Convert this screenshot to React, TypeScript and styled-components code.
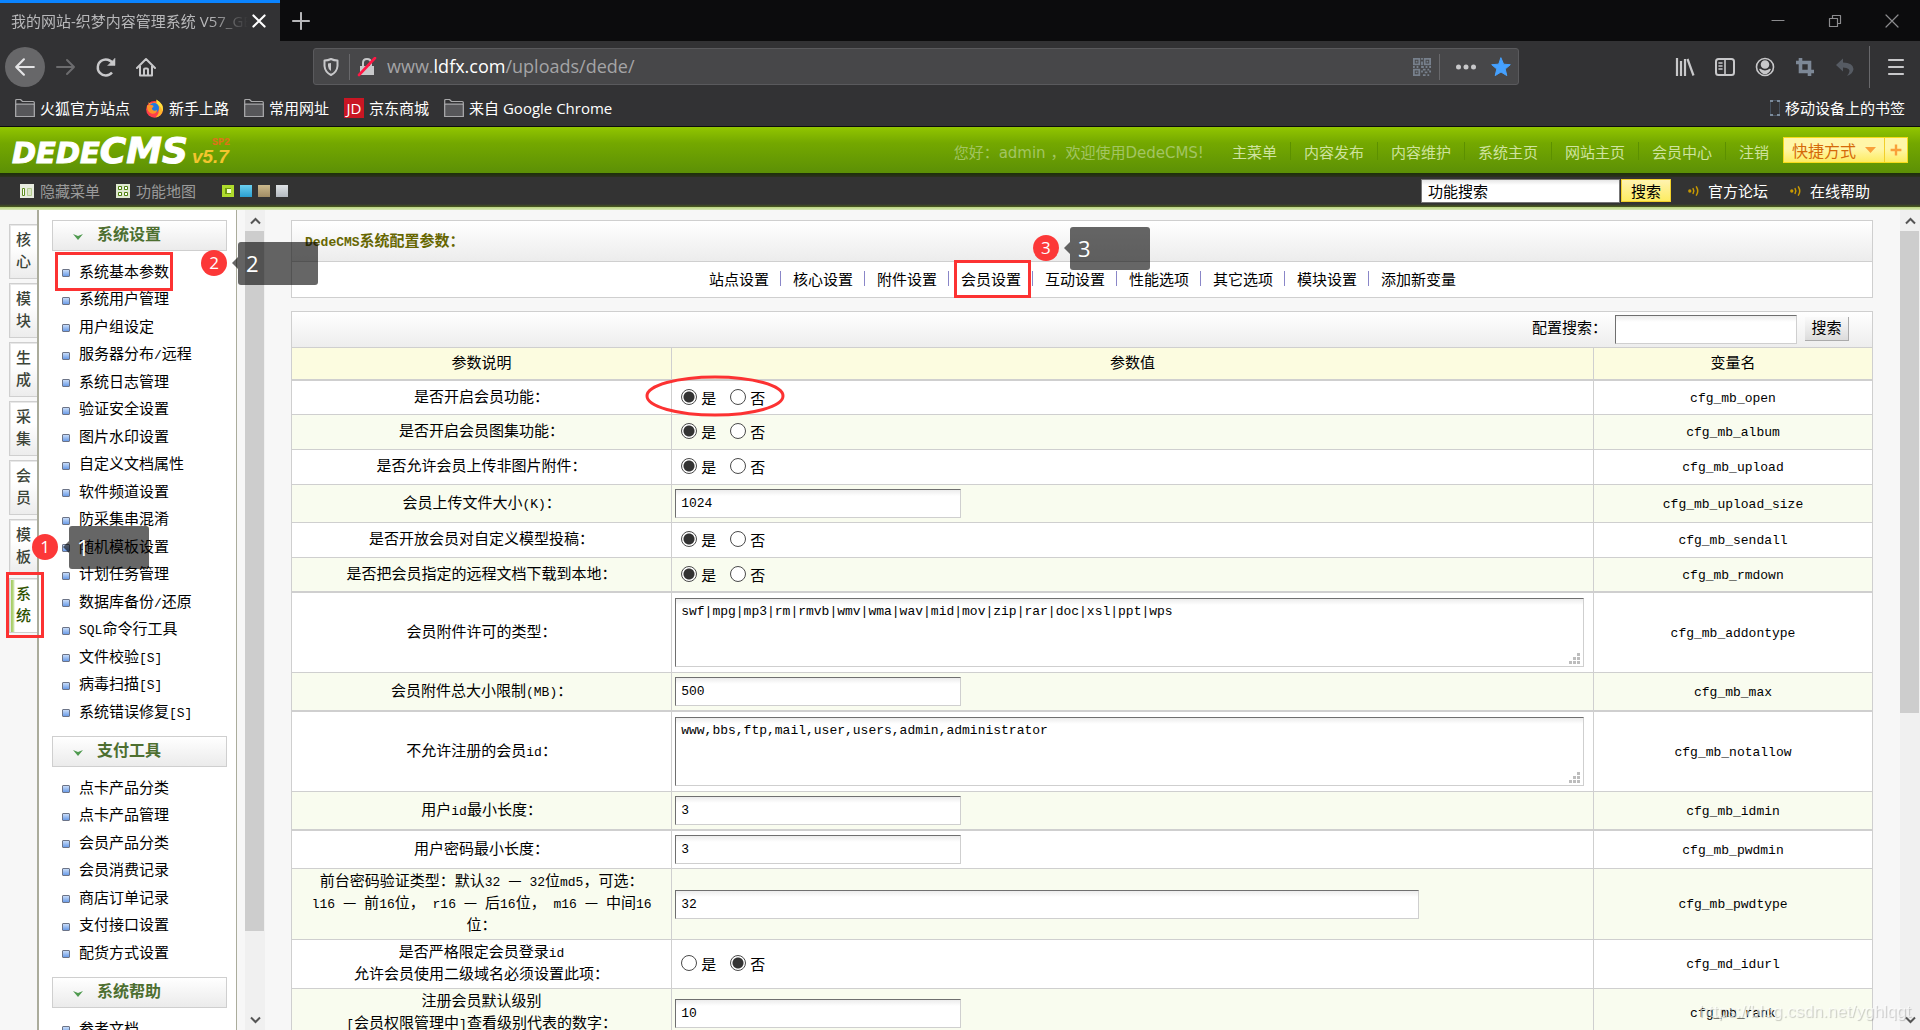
import React from "react";
import styled, { createGlobalStyle, css } from "styled-components";

const CJK = `"Noto Sans CJK SC", sans-serif`;
const UI = `"Open Sans", "Noto Sans CJK SC", sans-serif`;
const MONO = `"Liberation Mono", "Noto Sans CJK SC", monospace`;
const LINE = "#cfcfcf";
const RED = "#fc3838";

const Global = createGlobalStyle`
  * { box-sizing: border-box; }
  html, body { margin: 0; background: #f7f7f7; }
  body { font: 15px/22px ${CJK}; color: #000; overflow: hidden; }
  a { color: inherit; text-decoration: none; white-space: nowrap; }
  button { font: inherit; color: inherit; padding: 0; margin: 0; border: 0; background: none; cursor: pointer; }
  ul { list-style: none; margin: 0; padding: 0; }
  svg { display: block; flex: none; }
`;

const Page = styled.div`
  height: 100vh;
  display: flex;
  flex-direction: column;
  overflow: hidden;
`;

/* ---------- browser chrome ---------- */
const TabStrip = styled.div`
  display: flex;
  align-items: center;
  height: 41px;
  background: #0c0c0d;
  color: #b8b8ba;
  flex: none;
`;
const Tab = styled.div`
  display: flex;
  align-items: center;
  width: 280px;
  height: 41px;
  padding: 0 14px 2px 11px;
  border-top: 3px solid #0a84ff;
  background: #323234;
  margin-right: 12px;
`;
const TabTitle = styled.span`
  flex: 1;
  overflow: hidden;
  white-space: nowrap;
  font: 15px/22px ${UI};
  margin-right: 4px;
  mask-image: linear-gradient(90deg, #000 84%, transparent 100%);
`;
const WindowButtons = styled.div`
  display: flex;
  gap: 37px;
  margin-left: auto;
  padding-right: 18px;
  color: #8c8c8e;
`;
const NavBar = styled.div`
  display: flex;
  align-items: center;
  height: 51px;
  padding: 0 14px 0 5px;
  background: #323234;
  color: #c8c8ca;
  flex: none;
`;
const NavButtons = styled.div`
  display: flex;
  gap: 20px;
  align-items: center;
  width: 308px;
`;
const BackButton = styled.button`
  width: 40px;
  height: 40px;
  border-radius: 50%;
  background: #676769;
  display: grid;
  place-items: center;
  margin-right: -9px;
`;
const UrlBar = styled.div`
  display: flex;
  align-items: center;
  flex: 1;
  height: 37px;
  padding: 0 7px;
  border: 1px solid #5a5a5d;
  border-radius: 3px;
  background: #474749;
`;
const Rule = styled.span<{ $h: number; $m: string }>`
  width: 1px;
  height: ${(p) => p.$h}px;
  margin: ${(p) => p.$m};
  background: #68686b;
`;
const UrlText = styled.span`
  flex: 1;
  padding: 0 0 2px 10px;
  font: 18px/24px ${UI};
  color: #a4a4a6;
  b { font-weight: 400; color: #fff; }
`;
const ToolIcons = styled.div`
  display: flex;
  align-items: center;
  justify-content: flex-end;
  gap: 20px;
  width: 387px;
`;
const Bookmarks = styled.div`
  display: flex;
  align-items: center;
  gap: 15px;
  height: 35px;
  padding: 0 15px 2px;
  background: #323234;
  border-bottom: 1px solid #0c0c0d;
  color: #fff;
  font: 15px/22px ${UI};
  flex: none;
`;
const Bookmark = styled.a<{ $end?: boolean }>`
  display: flex;
  align-items: center;
  gap: 5px;
  margin-left: ${(p) => (p.$end ? "auto" : 0)};
`;
const JdBadge = styled.span`
  width: 20px;
  height: 20px;
  background: #c91623;
  font: 15px/20px ${UI};
  text-align: center;
`;

/* ---------- CMS header ---------- */
const Header = styled.header`
  display: flex;
  align-items: center;
  height: 50px;
  padding: 0 12px 4px;
  background: linear-gradient(#92c600 0, #74a800 16px, #5c9006 46px, #1d3008 46px, #2c3020 50px);
  color: #cfe39f;
  flex: none;
`;
const Logo = styled.a`
  display: flex;
  align-items: baseline;
  padding-top: 8px;
  color: #fff;
  font: italic 900 29px/36px "DejaVu Sans", sans-serif;
  -webkit-text-stroke: 1px #fff;
`;
const LogoBig = styled.span`
  font-size: 36px;
`;
const Version = styled.span`
  position: relative;
  margin-left: 4px;
  color: #f3c52e;
  font: italic 700 19px/36px "Liberation Sans", sans-serif;
  -webkit-text-stroke: 0;
`;
const Patch = styled.sup`
  position: absolute;
  top: -2px;
  right: -1px;
  color: #e0701a;
  font: 700 10px/12px "Liberation Mono", monospace;
`;
const Greeting = styled.span`
  margin-left: auto;
  margin-right: 28px;
  padding-top: 5px;
  color: #a3c562;
  font: 15px/22px "DejaVu Sans", "Noto Sans CJK SC", sans-serif;
`;
const HeaderLink = styled.a`
  display: flex;
  padding-top: 3px;
  &::after {
    content: "";
    width: 1px;
    height: 18px;
    margin: 1px 13px 0;
    background: #5c9000;
  }
  &:last-of-type::after { width: 0; margin-left: 1px; }
`;
const Quick = styled.div`
  display: flex;
  height: 26px;
  border: 1px solid #f7dc1a;
  background: linear-gradient(#fff6a8 0 45%, #fdec62);
  color: #d56a08;
  font-size: 16px;
  line-height: 24px;
`;
const QuickMain = styled.button`
  display: flex;
  align-items: center;
  gap: 9px;
  padding: 0 8px;
  border-right: 1px solid #f1cf2a;
`;
const QuickAdd = styled.button`
  width: 22px;
  display: grid;
  place-items: center;
`;
const SubBar = styled.div`
  display: flex;
  align-items: center;
  height: 33px;
  padding: 0 50px 6px 20px;
  background: linear-gradient(#333 27px, #4a5c1c 30px, #b9d47e 30px, #d8e8b8 33px);
  color: #9a9a9a;
  flex: none;
`;
const SubLink = styled.a<{ $light?: boolean }>`
  display: flex;
  align-items: center;
  gap: 6px;
  margin-right: 16px;
  ${(p) => p.$light && css`color: #fff; margin: 0 0 0 22px; gap: 8px;`}
`;
const Swatch = styled.button<{ $c: string }>`
  width: 12px;
  height: 12px;
  background: ${(p) => p.$c};
  margin-right: 6px;
`;
const Swatches = styled.div`
  display: flex;
  margin-left: 10px;
`;
const TopSearch = styled.form`
  display: flex;
  align-items: center;
  gap: 1px;
  margin-left: auto;
  margin-right: -5px;
`;
const TopInput = styled.input`
  width: 199px;
  height: 24px;
  padding: 0 6px;
  border: 1px solid #777;
  background: linear-gradient(#e6e6e6, #fff 5px);
  font: 15px/20px ${CJK};
  color: #000;
`;
const TopButton = styled.button`
  width: 50px;
  height: 23px;
  border: 1px solid #f1cf2a;
  background: linear-gradient(#fff3b0, #fdec62);
  color: #000;
  line-height: 20px;
`;

/* ---------- frames ---------- */
const Body = styled.div`
  display: flex;
  flex: 1;
  min-height: 0;
  overflow: hidden;
`;
const Rail = styled.nav`
  display: flex;
  flex-direction: column;
  gap: 4px;
  width: 37px;
  padding: 14px 0 0 9px;
  flex: none;
`;
const RailTab = styled.a<{ $active?: boolean }>`
  position: relative;
  height: 55px;
  padding: 3px 5px 0 6px;
  border: 1px solid ${LINE};
  border-right: 0;
  box-shadow: inset 1px 1px 0 #e8e8e8;
  background: linear-gradient(#fff 40%, #ececec);
  color: #3c4438;
  white-space: normal;
  font-weight: 500;
  ${(p) =>
    p.$active &&
    css`
      background: linear-gradient(90deg, #9cc653 0, #b4d67e 3px, #fff 5px);
      color: #2f5200;
    `}
`;
const MenuPane = styled.nav`
  width: 200px;
  padding: 10px 9px 0 13px;
  border: solid #abac9c;
  border-width: 0 1px 0 2px;
  background: #fff;
  margin-right: 8px;
  flex: none;
`;
const MenuHeading = styled.button`
  display: flex;
  align-items: center;
  gap: 14px;
  width: 100%;
  height: 31px;
  padding: 0 20px 6px;
  border: 1px solid ${LINE};
  background: linear-gradient(#fff, #ebebeb);
  color: #4d6f30;
  font-weight: 700;
  font-size: 16px;
  svg { margin-top: 8px; }
`;
const MenuList = styled.ul`
  margin: 7px 0 10px;
`;
const MenuItem = styled.li`
  position: relative;
  display: flex;
  align-items: center;
  gap: 9px;
  height: 27px;
  padding-left: 10px;
  &:nth-child(odd) { height: 28px; }
  a { padding-bottom: 3px; }
`;
const Bullet = styled.i`
  width: 8px;
  height: 8px;
  margin-top: 2px;
  border: 1px solid #6c7488;
  border-radius: 1px;
  background: linear-gradient(#c8dcf8, #6b9ce8);
  flex: none;
`;
const Track = styled.div`
  display: flex;
  flex-direction: column;
  width: 20px;
  height: 100%;
  background: #f0f0f0;
  flex: none;
`;
const TrackEnd = styled.div`
  height: 21px;
  display: grid;
  place-items: center;
  flex: none;
`;
const TrackRun = styled.div`
  flex: 1;
`;
const Thumb = styled.div<{ $share: number }>`
  height: ${(p) => p.$share}%;
  margin-right: 1px;
  background: #cdcdcd;
`;
const Main = styled.main`
  flex: 1;
  min-width: 0;
  padding: 10px 27px 0 26px;
`;
const Panel = styled.section`
  border: 1px solid ${LINE};
  background: #fff;
  margin-bottom: 13px;
`;
const PanelTitle = styled.h1`
  margin: 0;
  padding: 0 13px;
  height: 41px;
  border-bottom: 1px solid ${LINE};
  background: linear-gradient(#fff, #ececec);
  color: #666600;
  font-size: 15px;
  line-height: 38px;
`;
const Sections = styled.nav`
  display: flex;
  justify-content: center;
  height: 35px;
  padding: 0 0 2px 1px;
  align-items: center;
`;
const SectionCell = styled.span`
  position: relative;
  display: flex;
  align-items: center;
  & + &::before {
    content: "";
    width: 1px;
    height: 15px;
    margin: 0 12px 0 11px;
    background: #8a86c8;
  }
`;
const Anchor = styled.span`
  position: relative;
`;
const Filter = styled.form`
  display: flex;
  justify-content: flex-end;
  align-items: center;
  gap: 8px;
  height: 36px;
  padding-right: 23px;
  border-bottom: 1px solid ${LINE};
  background: linear-gradient(#fff, #ededed);
  label { padding-bottom: 5px; }
`;
const field = css`
  border: 1px solid;
  border-color: #6f6f6f ${LINE} ${LINE} #6f6f6f;
  background: linear-gradient(#ececec, #fff 6px);
  font: 13px/18px ${MONO};
  color: #000;
  border-radius: 0;
  display: block;
`;
const TextField = styled.input<{ $w: string }>`
  ${field}
  width: ${(p) => p.$w};
  height: 29px;
  padding: 0 5px;
`;
const FilterButton = styled.button`
  width: 44px;
  height: 24px;
  padding-bottom: 2px;
  margin-bottom: 2px;
  border: solid #ababab;
  border-width: 0 1px 1px 0;
  background: linear-gradient(#fafafa, #dcdcdc);
  line-height: 20px;
`;
const AreaWrap = styled.div`
  position: relative;
  width: calc(100% - 6px);
  svg { position: absolute; right: 4px; bottom: 3px; }
`;
const Area = styled.textarea`
  ${field}
  width: 100%;
  height: 69px;
  padding: 4px 5px;
  resize: none;
`;
const Table = styled.table`
  width: 100%;
  table-layout: fixed;
  border-collapse: separate;
  border-spacing: 0;
  th { font-weight: 400; background: #fcfce0; }
  th, td {
    padding: 0 3px;
    text-align: center;
    border-bottom: 1px solid ${LINE};
  }
  th, td:first-child, td:last-child { padding-bottom: 4px; }
  th + th, td + td { border-left: 1px solid ${LINE}; }
  td:nth-child(2) { text-align: left; }
`;
const Row = styled.tr<{ $h: number; $alt: boolean; $heavy?: boolean }>`
  height: ${(p) => p.$h}px;
  background: ${(p) => (p.$alt ? "#f9fcef" : "#fff")};
  td, th { border-bottom-width: ${(p) => (p.$heavy ? 2 : 1)}px; }
`;
const RowLabel = styled.label`
  display: block;
  white-space: pre;
`;
const Latin = styled.span`
  font-family: ${MONO};
  font-size: 13px;
  line-height: 14px;
`;
const Choices = styled.div`
  position: relative;
  display: flex;
  width: max-content;
  gap: 14px;
  padding-left: 6px;
`;
const Choice = styled.label`
  display: flex;
  align-items: center;
  gap: 4px;
`;
const Radio = styled.input`
  appearance: none;
  width: 16px;
  height: 16px;
  margin: 0 0 2px;
  border: 1px solid #4a4a4a;
  border-radius: 50%;
  background: #fff;
  &:checked { background: radial-gradient(#333 0 5px, #fff 6px); }
`;

/* ---------- annotations over the page ---------- */
const Frame = styled.span<{ $box: string }>`
  position: absolute;
  inset: ${(p) => p.$box};
  border: 3px solid #fc3232;
  z-index: 2;
  pointer-events: none;
`;
const Mark = styled.span<{ $x: number; $y: number }>`
  position: absolute;
  left: ${(p) => p.$x}px;
  top: ${(p) => p.$y}px;
  width: 26px;
  height: 26px;
  border-radius: 50%;
  background: ${RED};
  color: #fff;
  font: 17px/25px ${UI};
  text-align: center;
  z-index: 3;
`;
const Tip = styled.span`
  position: absolute;
  left: 37px;
  top: -8px;
  width: 80px;
  height: 43px;
  padding-left: 8px;
  border-radius: 3px;
  background: rgba(0, 0, 0, 0.6);
  font: 22px/43px ${UI};
  text-align: left;
  &::before {
    content: "";
    position: absolute;
    right: 100%;
    top: 15px;
    border: 6px solid transparent;
    border-right-color: rgba(0, 0, 0, 0.6);
    border-left: 0;
  }
`;
const Oval = styled.svg`
  position: absolute;
  left: -31px;
  top: -12px;
  z-index: 2;
  pointer-events: none;
`;
const Watermark = styled.span`
  position: fixed;
  right: 9px;
  bottom: 7px;
  font: 17px/22px "Liberation Sans", sans-serif;
  color: rgba(255, 255, 255, 0.6);
  text-shadow: 1px 1px 1px rgba(0, 0, 0, 0.2);
`;

const Step = ({ n, x, y }: { n: number; x: number; y: number }) => (
  <Mark $x={x} $y={y}>{n}<Tip>{n}</Tip></Mark>
);

const Mixed = ({ text }: { text: string }) => (
  <>
    {text.split(/([\x20-\x7e]+)/).map((part, i) => (i % 2 ? <Latin key={i}>{part}</Latin> : part))}
  </>
);

const Svg = (p: React.SVGProps<SVGSVGElement> & { s?: number }) => {
  const { s = 20, ...rest } = p;
  return <svg width={s} height={s} viewBox="0 0 20 20" fill="none" stroke="currentColor" strokeWidth="2" strokeLinecap="round" strokeLinejoin="round" {...rest} />;
};

const Folder = () => (
  <Svg strokeWidth="1.2" stroke="#a8a8aa">
    <path d="M0.700 18.500V2.500Q0.700 1.500 1.700 1.500H5.500L7.500 3.500H18.300Q19.300 3.500 19.300 4.500V18.500Z" />
    <path d="M0.700 18.500V7Q0.700 6.200 1.700 6.200H18.300Q19.300 6.200 19.300 7V18.500Z" fill="#57575a" />
  </Svg>
);
const Firefox = () => (
  <Svg s={19} stroke="none">
    <circle cx="10" cy="11" r="8.800" fill="#ff3d4a" />
    <path d="M3 3.500L5 6Q8 3 12 4V1Q20 5 18.800 12Q17.500 18.500 11 19.500Q16 15 14 9Z" fill="#ffb52a" />
    <path d="M12 0.500Q20.500 6 18.500 13Q17 8 13.500 6Q12 4 12 0.500Z" fill="#ffe23f" />
    <circle cx="9.500" cy="9.500" r="5.200" fill="#1f78e0" />
    <path d="M2 7Q4 5.500 8 6.500Q10 7.500 8 9Q6.500 10 8 11.500Q10 13 13 11.500Q11.500 16 7.500 15.500Q2 14 2 7Z" fill="#ff9328" />
  </Svg>
);
const Sound = () => (
  <Svg s={12} stroke="#c99a00" strokeWidth="2.500">
    <circle cx="3" cy="10" r="1.500" fill="#c99a00" />
    <path d="M8.500 6Q11 10 8.500 14M14 3Q18.500 10 14 17" />
  </Svg>
);
const Chevron = ({ up }: { up?: boolean }) => (
  <svg width="11" height="8" viewBox="0 0 11 8" fill="none" stroke="#555" strokeWidth="2">
    <path d={up ? "M1 6.500L5.500 2L10 6.500" : "M1 1.500L5.500 6L10 1.500"} />
  </svg>
);
const ScrollTrack = ({ share }: { share: number }) => (
  <Track aria-hidden>
    <TrackEnd><Chevron up /></TrackEnd>
    <TrackRun><Thumb $share={share} /></TrackRun>
    <TrackEnd><Chevron /></TrackEnd>
  </Track>
);
const Grip = () => (
  <svg width="11" height="11" viewBox="0 0 11 11" fill="#bdbdbd">
    <path d="M8 0h3v3H8zM4 4h3v3H4zM8 4h3v3H8zM0 8h3v3H0zM4 8h3v3H4zM8 8h3v3H8z" />
  </svg>
);

const menus = [
  {
    title: "系统设置",
    items: ["系统基本参数", "系统用户管理", "用户组设定", "服务器分布/远程", "系统日志管理", "验证安全设置", "图片水印设置", "自定义文档属性", "软件频道设置", "防采集串混淆", "随机模板设置", "计划任务管理", "数据库备份/还原", "SQL命令行工具", "文件校验[S]", "病毒扫描[S]", "系统错误修复[S]"],
  },
  { title: "支付工具", items: ["点卡产品分类", "点卡产品管理", "会员产品分类", "会员消费记录", "商店订单记录", "支付接口设置", "配货方式设置"] },
  { title: "系统帮助", items: ["参考文档"] },
];
const railTabs = ["核心", "模块", "生成", "采集", "会员", "模板", "系统"];
const sections = ["站点设置", "核心设置", "附件设置", "会员设置", "互动设置", "性能选项", "其它选项", "模块设置", "添加新变量"];
const headerLinks = ["主菜单", "内容发布", "内容维护", "系统主页", "网站主页", "会员中心", "注销"];

type Param = { label: string; name: string; h: number; kind: "radio" | "text" | "wide" | "area"; value: string; heavy?: boolean };
const params: Param[] = [
  { label: "是否开启会员功能：", name: "cfg_mb_open", h: 34, kind: "radio", value: "是" },
  { label: "是否开启会员图集功能：", name: "cfg_mb_album", h: 35, kind: "radio", value: "是" },
  { label: "是否允许会员上传非图片附件：", name: "cfg_mb_upload", h: 35, kind: "radio", value: "是" },
  { label: "会员上传文件大小(K)：", name: "cfg_mb_upload_size", h: 38, kind: "text", value: "1024" },
  { label: "是否开放会员对自定义模型投稿：", name: "cfg_mb_sendall", h: 35, kind: "radio", value: "是" },
  { label: "是否把会员指定的远程文档下载到本地：", name: "cfg_mb_rmdown", h: 35, kind: "radio", value: "是", heavy: true },
  { label: "会员附件许可的类型：", name: "cfg_mb_addontype", h: 80, kind: "area", value: "swf|mpg|mp3|rm|rmvb|wmv|wma|wav|mid|mov|zip|rar|doc|xsl|ppt|wps" },
  { label: "会员附件总大小限制(MB)：", name: "cfg_mb_max", h: 39, kind: "text", value: "500", heavy: true },
  { label: "不允许注册的会员id：", name: "cfg_mb_notallow", h: 80, kind: "area", value: "www,bbs,ftp,mail,user,users,admin,administrator" },
  { label: "用户id最小长度：", name: "cfg_mb_idmin", h: 39, kind: "text", value: "3", heavy: true },
  { label: "用户密码最小长度：", name: "cfg_mb_pwdmin", h: 38, kind: "text", value: "3" },
  { label: "前台密码验证类型：默认32 — 32位md5，可选：\nl16 — 前16位， r16 — 后16位， m16 — 中间16\n位：", name: "cfg_mb_pwdtype", h: 71, kind: "wide", value: "32" },
  { label: "是否严格限定会员登录id\n允许会员使用二级域名必须设置此项：", name: "cfg_md_idurl", h: 49, kind: "radio", value: "否" },
  { label: "注册会员默认级别\n[会员权限管理中]查看级别代表的数字：", name: "cfg_mb_rank", h: 49, kind: "text", value: "10" },
];

const Control = ({ p }: { p: Param }) => {
  if (p.kind === "radio")
    return (
      <Choices role="radiogroup">
        {["是", "否"].map((v) => (
          <Choice key={v}>
            <Radio type="radio" id={v === "是" ? p.name : undefined} name={p.name} defaultChecked={v === p.value} />
            {v}
          </Choice>
        ))}
        {p.name === "cfg_mb_open" && (
          <Oval width="142" height="44" fill="none" stroke="#fc3232" strokeWidth="3">
            <ellipse cx="71" cy="21" rx="68" ry="19" />
          </Oval>
        )}
      </Choices>
    );
  if (p.kind === "area")
    return <AreaWrap><Area id={p.name} defaultValue={p.value} spellCheck={false} /><Grip /></AreaWrap>;
  return <TextField id={p.name} type="text" $w={p.kind === "wide" ? "calc(81% + 3px)" : "286px"} defaultValue={p.value} />;
};

export default function App() {
  return (
    <Page>
      <Global />
      <TabStrip>
        <Tab>
          <TabTitle>我的网站-织梦内容管理系统 V57_GBK</TabTitle>
          <button aria-label="关闭标签页"><Svg s={14} stroke="#fff" strokeWidth="3"><path d="M2 2L18 18M18 2L2 18" /></Svg></button>
        </Tab>
        <button aria-label="新建标签页"><Svg s={18} strokeWidth="2.200"><path d="M10 1V19M1 10H19" /></Svg></button>
        <WindowButtons>
          <button aria-label="最小化"><Svg strokeWidth="1.200"><path d="M4 9.500H16" /></Svg></button>
          <button aria-label="还原"><Svg strokeWidth="1.200"><path d="M4.500 7.500H12.500V15.500H4.500ZM7.500 7V4.500H15.500V12.500H13" /></Svg></button>
          <button aria-label="关闭"><Svg strokeWidth="1.200"><path d="M4 4L16 16M16 4L4 16" /></Svg></button>
        </WindowButtons>
      </TabStrip>
      <NavBar>
        <NavButtons>
          <BackButton aria-label="后退"><Svg s={22} stroke="#e4e4e6"><path d="M18 10H2M9 3L2 10L9 17" /></Svg></BackButton>
          <button aria-label="前进"><Svg stroke="#6c6c6e"><path d="M1 10H18M11 3L18 10L11 17" /></Svg></button>
          <button aria-label="刷新"><Svg strokeWidth="2.400"><path d="M16 15.500A8 8 0 1 1 17 7" strokeLinecap="butt" /><path d="M19 1.500V8.500H12Z" fill="currentColor" strokeWidth="0.500" /></Svg></button>
          <button aria-label="主页"><Svg><path d="M1 11L10 2L19 11M4 9V18.500H16V9M8 18V12.500Q8 11.500 9 11.500H11Q12 11.500 12 12.500V18" /></Svg></button>
        </NavButtons>
        <UrlBar>
          <Svg><path d="M10 2Q13 3.500 16.500 3.500V9Q16 15 10 18Q4 15 3.500 9V3.500Q7 3.500 10 2Z" /><path d="M10 6V14Q7 12 7 9V6.500Z" fill="currentColor" stroke="none" /></Svg>
          <Rule $h={26} $m="0 7px 0 8px" />
          <Svg><path d="M6 9V6Q6 2 10 2Q14 2 14 6V9" /><path d="M3 9H17V18H3Z" fill="currentColor" stroke="none" /><path d="M2 18L18 1" stroke="#ff1744" strokeWidth="2.600" /></Svg>
          <UrlText>www.<b>ldfx.com</b>/uploads/dede/</UrlText>
          <Svg s={18} stroke="#77808c" strokeWidth="2" strokeLinecap="butt" strokeLinejoin="miter">
            <path d="M1 1H7V7H1ZM13 1H19V7H13ZM1 13H7V19H1ZM10 0V2M10 4V8M9 10H12M14 10H16M18 10H20M0 10H2M4 10H6M11 13H14M16 13H18M9 15H11M13 16H16M18 15H20M11 19H14M16 19H18" />
            <path d="M3 4H5M15 4H17M3 16H5" />
          </Svg>
          <Rule $h={26} $m="0 16px 0 8px" />
          <Svg fill="currentColor" stroke="none"><circle cx="2.500" cy="10" r="2.500" /><circle cx="10" cy="10" r="2.500" /><circle cx="17.500" cy="10" r="2.500" /></Svg>
          <Rule $h={0} $m="0 7px" />
          <Svg fill="#45a1ff" stroke="#45a1ff" strokeWidth="1"><path d="M10 1L12.600 7.200L19.300 7.700L14.200 12L15.800 18.600L10 15L4.200 18.600L5.800 12L0.700 7.700L7.400 7.200Z" /></Svg>
        </UrlBar>
        <ToolIcons>
          <button aria-label="书库"><Svg strokeLinecap="butt" strokeWidth="2.200"><path d="M2 1V19M6 4V19M10 2V19M12.500 2L18.500 18.500" /></Svg></button>
          <button aria-label="侧栏"><Svg><rect x="1" y="2" width="18" height="16" rx="2.500" /><path d="M10 2V18M4 6H7M4 9H7M4 12H7" strokeWidth="1.600" /></Svg></button>
          <button aria-label="账户"><Svg strokeWidth="1.600"><circle cx="10" cy="10" r="8.500" /><circle cx="10" cy="7.500" r="3.500" fill="currentColor" /><path d="M5 12.500Q10 16 15 12.500Q13 16.500 10 16.500Q7 16.500 5 12.500Z" fill="currentColor" /></Svg></button>
          <button aria-label="截图"><Svg stroke="#7d8896" strokeWidth="3.600" strokeLinecap="butt" strokeLinejoin="miter"><path d="M5.500 1V14.500H19M1 5.500H14.500V19" /></Svg></button>
          <button aria-label="撤销"><Svg stroke="none" fill="#565b63"><path d="M1 8L8 1.500V5.500Q18 5.500 18.500 12Q18 17 12 19Q16 14 13.500 12Q12 10.500 8 10.500V14.500Z" /></Svg></button>
          <Rule $h={42} $m="0 -4px 0 -6px" />
          <button aria-label="菜单"><Svg strokeLinecap="round" strokeWidth="2.200"><path d="M3 3H17M3 10H17M3 17H17" /></Svg></button>
        </ToolIcons>
      </NavBar>
      <Bookmarks>
        <Bookmark href="#"><Folder />火狐官方站点</Bookmark>
        <Bookmark href="#"><Firefox />新手上路</Bookmark>
        <Bookmark href="#"><Folder />常用网址</Bookmark>
        <Bookmark href="#"><JdBadge>JD</JdBadge>京东商城</Bookmark>
        <Bookmark href="#"><Folder />来自 Google Chrome</Bookmark>
        <Bookmark href="#" $end>
          <svg width="10" height="18" viewBox="0 0 10 18"><path d="M0 1H3V3H0ZM7 1H10V3H7ZM0 15H3V17H0ZM7 15H10V17H7Z" fill="#7c8b9b" /><path d="M3 1.500H7M3 16.500H7M0.500 3V15M9.500 3V15" stroke="#46505c" /></svg>
          移动设备上的书签
        </Bookmark>
      </Bookmarks>

      <Header>
        <Logo href="#">DEDE<LogoBig>CMS</LogoBig><Version>v5.7<Patch>SP2</Patch></Version></Logo>
        <Greeting>您好：admin ，欢迎使用DedeCMS!</Greeting>
        {headerLinks.map((t) => <HeaderLink href="#" key={t}>{t}</HeaderLink>)}
        <Quick>
          <QuickMain>快捷方式<svg width="11" height="6"><path d="M0 0H11L5.500 6Z" fill="#f9a03a" /></svg></QuickMain>
          <QuickAdd aria-label="添加"><Svg s={12} stroke="#f9a03a" strokeWidth="4" strokeLinecap="butt"><path d="M10 1V19M1 10H19" /></Svg></QuickAdd>
        </Quick>
      </Header>
      <SubBar>
        <SubLink href="#">
          <svg width="14" height="14"><path d="M0 0H14V14H0Z" fill="#e8ecdf" /><path d="M2.500 4.500H4.500V11.500H2.500Z" fill="#fff" stroke="#5f8f20" /><path d="M7.500 4.500H11.500V11.500H7.500Z" fill="#dbe6c8" stroke="#b4cc90" /></svg>
          隐藏菜单
        </SubLink>
        <SubLink href="#">
          <svg width="14" height="14"><path d="M0 0H14V14H0Z" fill="#dfe8d0" /><path d="M2.500 2.500H5.500V5.500H2.500ZM8.500 2.500H11.500V5.500H8.500ZM2.500 8.500H5.500V11.500H2.500ZM8.500 8.500H11.500V11.500H8.500Z" fill="#fff" stroke="#4f8010" /></svg>
          功能地图
        </SubLink>
        <Swatches>
          <Swatch aria-label="绿色" $c="linear-gradient(#f4ffd0, #f4ffd0) 5px 4px / 4px 4px no-repeat, linear-gradient(#6f9c10, #6f9c10) 3px 3px / 6px 6px no-repeat, #b0dc2c" />
          <Swatch aria-label="蓝色" $c="linear-gradient(#6cd0f0, #2a9fd0)" />
          <Swatch aria-label="棕色" $c="linear-gradient(#ccb98c, #a08c64)" />
          <Swatch aria-label="灰色" $c="linear-gradient(#dfe3e6, #b4bac0)" />
        </Swatches>
        <TopSearch>
          <TopInput aria-label="功能搜索" defaultValue="功能搜索" />
          <TopButton type="button">搜索</TopButton>
        </TopSearch>
        <SubLink href="#" $light><Sound />官方论坛</SubLink>
        <SubLink href="#" $light><Sound />在线帮助</SubLink>
      </SubBar>

      <Body>
        <Rail>
          {railTabs.map((t) => (
            <RailTab href="#" key={t} $active={t === "系统"}>
              {t}
              {t === "系统" && <><Frame $box="-7px -7px -6px -4px" /><Step n={1} x={22} y={-45} /></>}
            </RailTab>
          ))}
        </Rail>
        <MenuPane>
          {menus.map((m) => (
            <React.Fragment key={m.title}>
              <MenuHeading>
                <svg width="10" height="6"><path d="M0 0L5 2L10 0L5 6Z" fill="#4f9a4f" /></svg>
                {m.title}
              </MenuHeading>
              <MenuList>
                {m.items.map((t) => (
                  <MenuItem key={t}>
                    <Bullet />
                    <a href="#"><Mixed text={t} /></a>
                    {t === "系统基本参数" && <><Frame $box="-6px 54px -5px 3px" /><Step n={2} x={149} y={-8} /></>}
                  </MenuItem>
                ))}
              </MenuList>
            </React.Fragment>
          ))}
        </MenuPane>
        <ScrollTrack share={90} />
        <Main>
          <Panel>
            <PanelTitle><Mixed text="DedeCMS系统配置参数：" /></PanelTitle>
            <Sections>
              {sections.map((t) => (
                <SectionCell key={t}>
                  <Anchor>
                    <a href="#">{t}</a>
                    {t === "会员设置" && <><Frame $box="-8px -10px -8px -7px" /><Step n={3} x={72} y={-33} /></>}
                  </Anchor>
                </SectionCell>
              ))}
            </Sections>
          </Panel>
          <Panel>
            <Filter>
              <label htmlFor="filter">配置搜索：</label>
              <TextField id="filter" $w="182px" />
              <FilterButton type="button">搜索</FilterButton>
            </Filter>
            <Table>
              <colgroup>
                <col width="24%" />
                <col />
                <col width="279" />
              </colgroup>
              <thead>
                <Row $h={33} $alt={false} $heavy><th>参数说明</th><th>参数值</th><th>变量名</th></Row>
              </thead>
              <tbody>
                {params.map((p, i) => (
                  <Row key={p.name} $h={p.h} $alt={i % 2 === 1} $heavy={p.heavy}>
                    <td><RowLabel htmlFor={p.name}><Mixed text={p.label} /></RowLabel></td>
                    <td><Control p={p} /></td>
                    <td><Latin>{p.name}</Latin></td>
                  </Row>
                ))}
              </tbody>
            </Table>
          </Panel>
        </Main>
        <ScrollTrack share={62} />
      </Body>
      <Watermark>https://blog.csdn.net/yghlqgt</Watermark>
    </Page>
  );
}
